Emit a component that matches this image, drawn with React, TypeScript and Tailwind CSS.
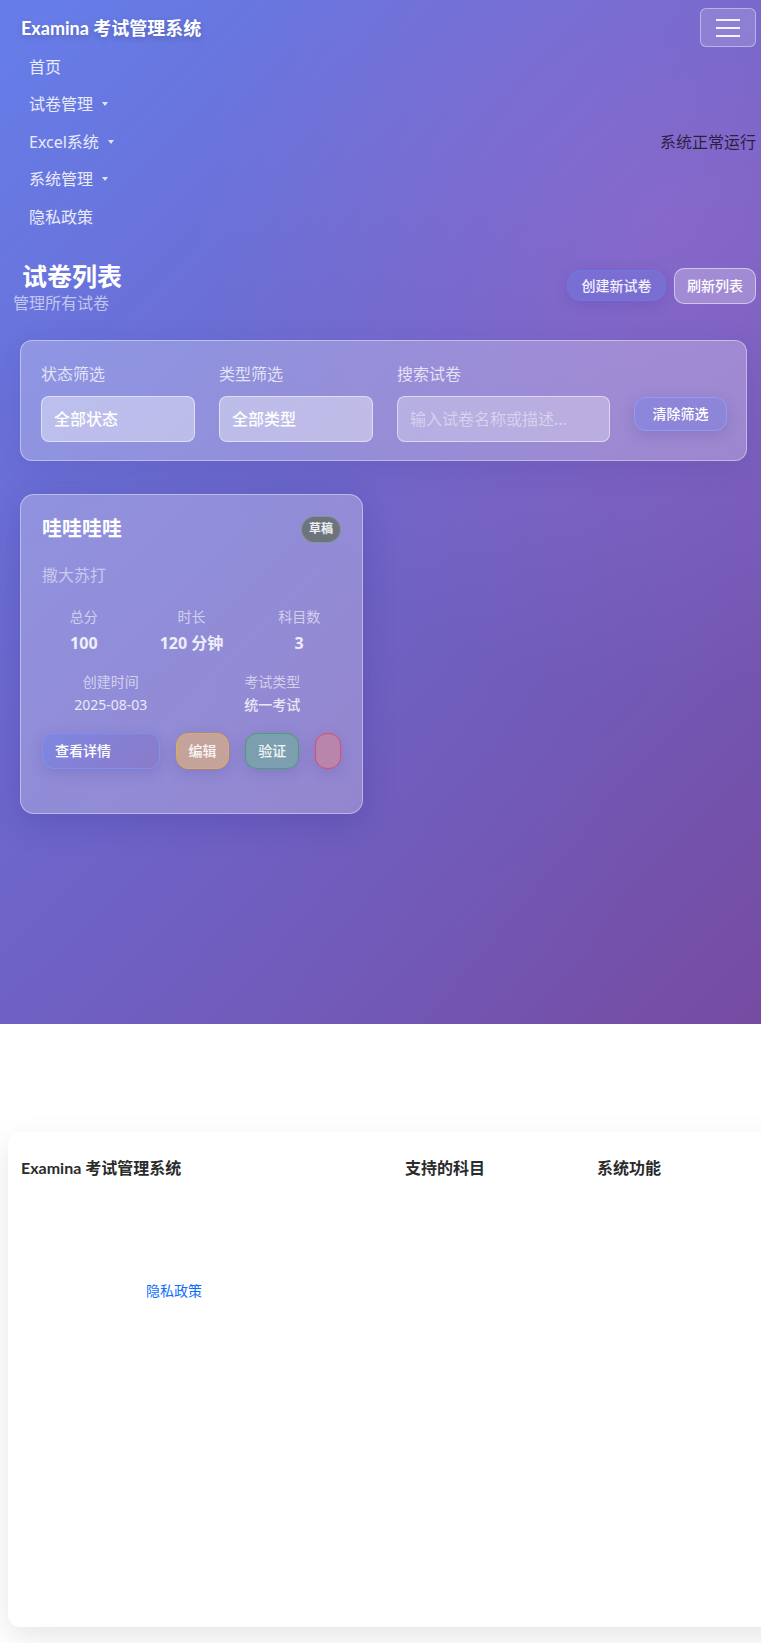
import React from 'react';

const navItems = [
    { label: '首页', caret: false },
    { label: '试卷管理', caret: true },
    { label: 'Excel系统', caret: true },
    { label: '系统管理', caret: true },
    { label: '隐私政策', caret: false },
];

const Caret: React.FC = () => (
    <span className="ml-[9px] inline-block w-0 h-0 border-l-[3.5px] border-r-[3.5px] border-t-[4px] border-l-transparent border-r-transparent border-t-white/80" />
);

const FilterSelect: React.FC<{ label: string; value: string }> = ({ label, value }) => (
    <div>
        <div className="h-[27px] mb-2 flex items-center text-[16px] text-white/75">{label}</div>
        <div className="h-[46px] rounded-lg bg-white/40 border border-white/50 flex items-center px-[12px] text-[16px] font-medium text-white">
            {value}
        </div>
    </div>
);

const App: React.FC = () => {
    return (
        <div className="w-[761px] min-h-[1643px] overflow-hidden bg-white font-['Noto_Sans','Noto_Sans_CJK_SC',sans-serif]">
            {/* 渐变主区域 */}
            <section className="h-[1024px] bg-[radial-gradient(circle_at_88%_22%,rgba(180,110,210,0.35)_0%,transparent_45%),radial-gradient(circle_at_10%_85%,rgba(110,100,210,0.25)_0%,transparent_50%),linear-gradient(135deg,#667eea_0%,#764ba2_100%)]">
                <nav className="pl-[21px] pr-[5px]">
                    <div className="h-[48px] pt-2 flex justify-between items-start">
                        <div className="mt-[7px] font-['Lato','Noto_Sans_CJK_SC',sans-serif] text-[18px] leading-[27px] font-bold text-white [text-shadow:0_2px_6px_rgba(0,0,0,0.2)]">
                            Examina 考试管理系统
                        </div>
                        <button className="w-[56px] h-[39px] rounded-md bg-white/15 border border-white/40 flex flex-col items-center justify-center gap-[6px]">
                            <span className="block w-[24px] h-[2px] bg-white/90" />
                            <span className="block w-[24px] h-[2px] bg-white/90" />
                            <span className="block w-[24px] h-[2px] bg-white/90" />
                        </button>
                    </div>
                    <div className="flex items-center justify-between">
                        <ul className="pl-2">
                            {navItems.map(item => (
                                <li key={item.label} className="h-[37.5px] flex items-center text-[16px] text-white/85">
                                    <span>{item.label}</span>
                                    {item.caret && <Caret />}
                                </li>
                            ))}
                        </ul>
                        <span className="text-[16px] text-black/70">系统正常运行</span>
                    </div>
                </nav>

                {/* 标题区 */}
                <div className="mt-[25px] pl-[13px] pr-[5px] flex justify-between items-center">
                    <div>
                        <h1 className="ml-[9px] text-[25px] leading-[30px] font-bold text-white">试卷列表</h1>
                        <p className="text-[16px] leading-[24px] text-white/60">管理所有试卷</p>
                    </div>
                    <div className="flex items-center gap-2 mb-[4px]">
                        <button className="w-[99px] h-[31px] rounded-[14px] bg-[rgba(102,126,234,0.3)] border border-[rgba(102,126,234,0.55)] shadow-[0_4px_14px_rgba(60,50,150,0.2)] text-[14px] font-medium text-white/90">
                            创建新试卷
                        </button>
                        <button className="w-[82px] h-[36px] rounded-[10px] bg-white/25 border border-white/50 text-[14px] font-medium text-white">
                            刷新列表
                        </button>
                    </div>
                </div>

                {/* 筛选卡片 */}
                <div className="mt-[25px] ml-[20px] w-[727px] h-[121px] rounded-xl bg-white/25 border border-white/40 shadow-[0_8px_32px_rgba(31,38,135,0.12)] pt-[20px] pl-[20px] pr-[19px]">
                    <div className="grid grid-cols-[154px_154px_213px_94px] gap-x-6">
                        <FilterSelect label="状态筛选" value="全部状态" />
                        <FilterSelect label="类型筛选" value="全部类型" />
                        <div>
                            <div className="h-[27px] mb-2 flex items-center text-[16px] text-white/75">搜索试卷</div>
                            <div className="h-[46px] rounded-lg bg-white/30 border border-white/50 flex items-center px-[12px] text-[16px] text-white/45">
                                输入试卷名称或描述...
                            </div>
                        </div>
                        <div className="pt-[36px]">
                            <button className="w-[93px] h-[34px] rounded-xl bg-[rgba(102,126,234,0.3)] border border-[#8f9cf0] shadow-[0_4px_14px_rgba(60,50,150,0.2)] text-[14px] font-medium text-white">
                                清除筛选
                            </button>
                        </div>
                    </div>
                </div>

                {/* 试卷卡片 */}
                <div className="mt-[33px] ml-[20px] w-[343px] rounded-[14px] bg-white/25 border border-white/40 shadow-[0_8px_32px_rgba(31,38,135,0.22)] pt-[21px] px-[21px]">
                    <div className="flex justify-between items-center">
                        <h3 className="text-[20px] leading-[26px] font-bold text-white">哇哇哇哇</h3>
                        <span className="w-[40px] h-[27px] rounded-full bg-[#6c757d] border border-white/20 flex items-center justify-center text-[12px] font-bold text-white/90">
                            草稿
                        </span>
                    </div>
                    <p className="mt-5 text-[16px] leading-[24px] text-white/50">撒大苏打</p>

                    <div className="mt-5 -mx-3 grid grid-cols-3 text-center">
                        {[
                            ['总分', '100'],
                            ['时长', '120 分钟'],
                            ['科目数', '3'],
                        ].map(([k, v]) => (
                            <div key={k}>
                                <div className="text-[14px] leading-[20px] text-white/60">{k}</div>
                                <div className="mt-1 text-[16px] leading-[24px] font-bold text-white/85">{v}</div>
                            </div>
                        ))}
                    </div>

                    <div className="mt-[17px] -mx-3 grid grid-cols-2 text-center">
                        <div>
                            <div className="text-[14px] leading-[20px] text-white/60">创建时间</div>
                            <div className="mt-[3px] text-[14px] leading-[20px] text-white/80">2025-08-03</div>
                        </div>
                        <div>
                            <div className="text-[14px] leading-[20px] text-white/60">考试类型</div>
                            <div className="mt-[3px] text-[14px] leading-[20px] font-medium text-white/80">统一考试</div>
                        </div>
                    </div>

                    <div className="mt-[18px] mb-[44px] flex items-center gap-4">
                        <button className="w-[118px] h-[36px] rounded-xl bg-[linear-gradient(135deg,rgba(102,126,234,0.45),rgba(118,75,162,0.25))] border border-[#8290ec] shadow-[0_4px_14px_rgba(60,50,150,0.2)] px-3 text-left text-[14px] font-medium text-white">
                            查看详情
                        </button>
                        <button className="w-[54px] h-[36px] rounded-xl bg-[#c4a39b] border border-[#e5ab45] shadow-[0_4px_14px_rgba(60,50,150,0.18)] text-[14px] font-medium text-white/90">
                            编辑
                        </button>
                        <button className="w-[54px] h-[36px] rounded-xl bg-[#7b9fae] border border-[#45a46c] shadow-[0_4px_14px_rgba(60,50,150,0.18)] text-[14px] font-medium text-white/90">
                            验证
                        </button>
                        <button className="w-[26px] h-[36px] rounded-xl bg-[#b886ad] border border-[#d85068] shadow-[0_4px_14px_rgba(60,50,150,0.18)]" />
                    </div>
                </div>
            </section>

            {/* 页脚 */}
            <div className="h-[108px]" />
            <footer className="ml-[8px] w-[820px] h-[495px] rounded-xl bg-white shadow-[0_10px_30px_rgba(0,0,0,0.1)] pt-6 pl-[13px]">
                <div className="grid grid-cols-[384px_192px_192px]">
                    <div>
                        <h5 className="font-['Lato','Noto_Sans_CJK_SC',sans-serif] text-[16px] leading-[24px] font-bold text-[#2b2b2b]">Examina 考试管理系统</h5>
                        <a className="mt-[101px] ml-[125px] block text-[14px] leading-[20px] text-[#0d6efd]">隐私政策</a>
                    </div>
                    <h5 className="text-[16px] leading-[24px] font-bold text-[#2b2b2b]">支持的科目</h5>
                    <h5 className="text-[16px] leading-[24px] font-bold text-[#2b2b2b]">系统功能</h5>
                </div>
            </footer>
        </div>
    );
};

export default App;
